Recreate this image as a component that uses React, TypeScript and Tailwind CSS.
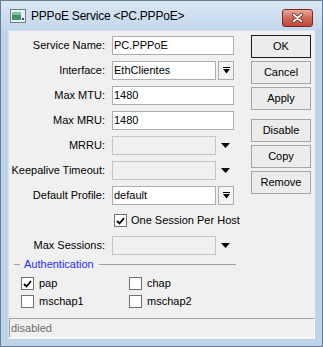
import React from "react";

const Tri = () => (
  <svg width="9" height="5" viewBox="0 0 9 5"><polygon points="0,0 9,0 4.5,5" fill="#000" /></svg>
);

const DropBtn = () => (
  <div className="w-[16px] h-[19px] border border-[#acacac] bg-[#f4f4f4] flex items-center justify-center">
    <svg width="7" height="7" viewBox="0 0 7 7">
      <rect x="0" y="0" width="7" height="1" fill="#000" />
      <polygon points="0,2 7,2 3.5,6.5" fill="#000" />
    </svg>
  </div>
);

const Check = () => (
  <svg width="9" height="8" viewBox="0 0 9 8">
    <path d="M1 4 L3.5 6.5 L8 1" stroke="#000" strokeWidth="1.8" fill="none" />
  </svg>
);

function Box({ checked }: { checked?: boolean }) {
  return (
    <div className="w-[13px] h-[13px] border border-[#707070] bg-white flex items-center justify-center shrink-0">
      {checked ? <Check /> : null}
    </div>
  );
}

function Row({ label, children }: { label: string; children: React.ReactNode }) {
  return (
    <div className="flex items-center h-[19px]">
      <div className="w-[97px] text-right pr-[1px] whitespace-nowrap">{label}</div>
      <div className="ml-[6px] flex items-center">{children}</div>
    </div>
  );
}

const Input = ({ value, w }: { value: string; w: string }) => (
  <div className={`${w} h-[19px] border border-[#abadb3] bg-white pl-[1px] flex items-center leading-none`}>{value}</div>
);

const DisInput = () => (
  <div className="w-[104px] h-[19px] border border-[#c6c6c6] bg-[#f0f0f0]" />
);

function Btn({ label, def, extra }: { label: string; def?: boolean; extra?: string }) {
  return (
    <div
      className={`w-[60px] h-[23px] flex items-center justify-center bg-[#ececec] border ${
        def ? "border-[#1c1c1c]" : "border-[#a6a6a6]"
      } ${extra ?? ""}`}
    >
      {label}
    </div>
  );
}

export default function App() {
  return (
    <div className="w-[323px] h-[347px] bg-[#bcd3ea] border border-[#6a7c90] flex flex-col font-['Liberation_Sans',Arial,sans-serif] text-[11px] text-black overflow-hidden">
      {/* Title bar */}
      <div className="h-[29px] shrink-0 flex items-center bg-gradient-to-b from-[#dbe7f4] to-[#c3d7ed] relative">
        <svg className="ml-[9px]" width="16" height="14" viewBox="0 0 16 14">
          <rect x="0.5" y="0.5" width="15" height="13" fill="#e8eef3" stroke="#6f7e8a" />
          <rect x="2" y="3" width="9" height="8" fill="#3f8f6a" />
          <rect x="2" y="3" width="9" height="3" fill="#7cc3a0" />
          <rect x="12" y="9" width="2" height="2" fill="#2c4f7a" />
        </svg>
        <div className="ml-[5px] text-[12px] tracking-[-0.2px] text-black">PPPoE Service &lt;PC.PPPoE&gt;</div>
        <div className="absolute left-[281px] top-[8px] w-[31px] h-[18px] rounded-[3px] border border-[#7a2a20] bg-gradient-to-b from-[#e9a99c] via-[#d0685a] to-[#c2483a] flex items-center justify-center">
          <svg width="11" height="10" viewBox="0 0 11 10">
            <path d="M1.5 1.5 L9.5 8.5 M9.5 1.5 L1.5 8.5" stroke="#5a1a14" strokeWidth="3.2" strokeLinecap="round" />
            <path d="M1.5 1.5 L9.5 8.5 M9.5 1.5 L1.5 8.5" stroke="#ffffff" strokeWidth="1.8" strokeLinecap="round" />
          </svg>
        </div>
      </div>
      {/* Body */}
      <div className="flex-1 flex px-[7px] pb-[7px]">
        <div className="flex-1 bg-[#f0f0f0] border-t border-l border-[#d9e3ee] flex flex-col">
          <div className="flex">
            {/* form */}
            <div className="w-[242px] flex flex-col pt-[5px]">
              <div className="flex flex-col gap-[6px]">
                <Row label="Service Name:"><Input value="PC.PPPoE" w="w-[122px]" /></Row>
                <Row label="Interface:">
                  <Input value="EthClientes" w="w-[104px]" />
                  <div className="ml-[2px]"><DropBtn /></div>
                </Row>
                <Row label="Max MTU:"><Input value="1480" w="w-[122px]" /></Row>
                <Row label="Max MRU:"><Input value="1480" w="w-[122px]" /></Row>
                <Row label="MRRU:">
                  <DisInput />
                  <div className="w-[18px] flex justify-center"><Tri /></div>
                </Row>
                <Row label="Keepalive Timeout:">
                  <DisInput />
                  <div className="w-[18px] flex justify-center"><Tri /></div>
                </Row>
                <Row label="Default Profile:">
                  <Input value="default" w="w-[104px]" />
                  <div className="ml-[2px]"><DropBtn /></div>
                </Row>
                <div className="flex items-center h-[19px] pl-[105px]">
                  <Box checked />
                  <span className="ml-[4px]">One Session Per Host</span>
                </div>
                <Row label="Max Sessions:">
                  <DisInput />
                  <div className="w-[18px] flex justify-center"><Tri /></div>
                </Row>
              </div>
              {/* Authentication */}
              <div className="flex items-center h-[14px] mt-[2px] ml-[5px] w-[222px]">
                <div className="w-[6px] h-px bg-[#a0a0a0]" />
                <span className="ml-[4px] text-[#2b2bff] leading-none">Authentication</span>
                <div className="ml-[5px] flex-1 h-px bg-[#a0a0a0]" />
              </div>
              <div className="grid grid-cols-[108px_1fr] gap-y-[3px] mt-[5px] ml-[12px]">
                <div className="flex items-center h-[15px]"><Box checked /><span className="ml-[5px]">pap</span></div>
                <div className="flex items-center h-[15px]"><Box /><span className="ml-[5px]">chap</span></div>
                <div className="flex items-center h-[15px]"><Box /><span className="ml-[5px]">mschap1</span></div>
                <div className="flex items-center h-[15px]"><Box /><span className="ml-[5px]">mschap2</span></div>
              </div>
            </div>
            {/* buttons */}
            <div className="flex flex-col pt-[4px] gap-[3px]">
              <Btn label="OK" def />
              <Btn label="Cancel" />
              <Btn label="Apply" />
              <Btn label="Disable" extra="mt-[6px]" />
              <Btn label="Copy" />
              <Btn label="Remove" />
            </div>
          </div>
          <div className="mt-auto mb-[1px] h-[20px] border-t border-l border-[#a0a0a0] border-r border-b border-r-white border-b-white flex items-center pl-[1px] text-[#6d6d6d]">
            disabled
          </div>
        </div>
      </div>
    </div>
  );
}
